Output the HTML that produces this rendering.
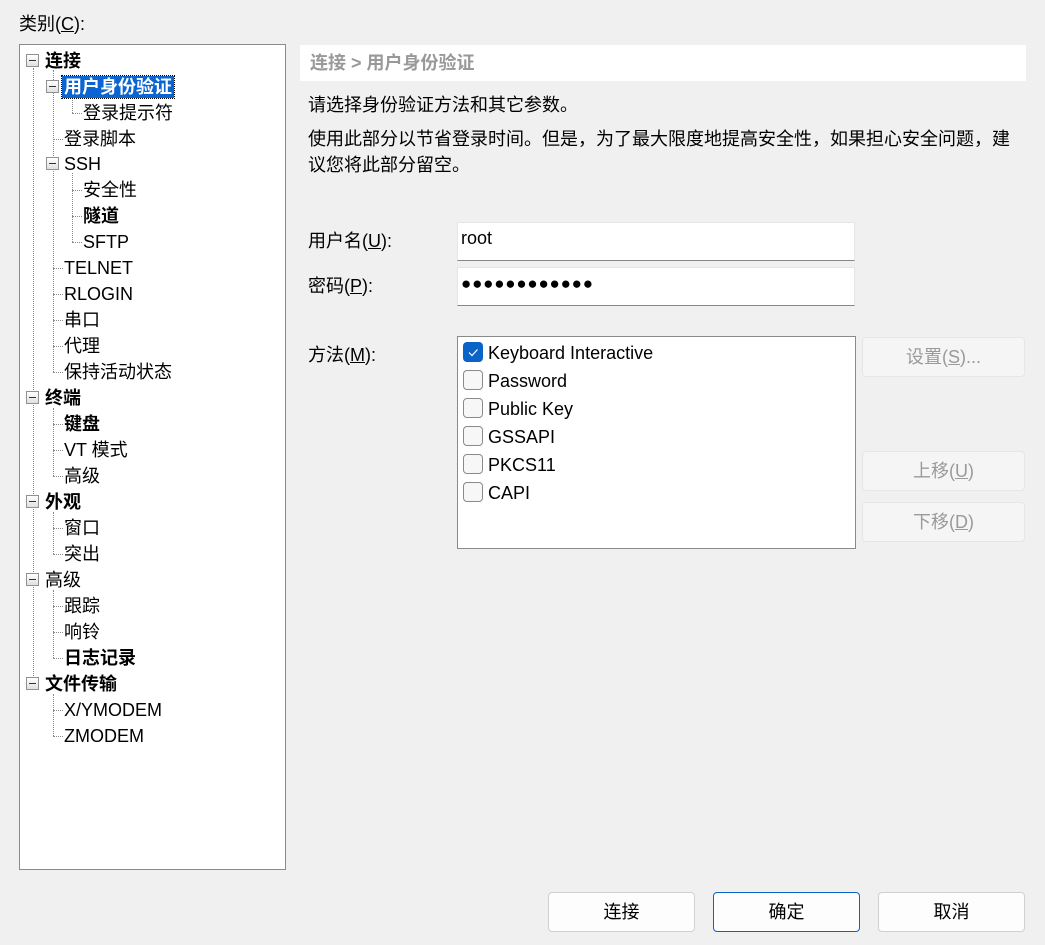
<!DOCTYPE html>
<html><head><meta charset="utf-8"><style>
*{margin:0;padding:0;box-sizing:border-box}
body{width:1045px;height:945px;background:#f0f0f0;font-family:"Liberation Sans","Noto Sans CJK SC",sans-serif;font-size:18px;color:#000;position:relative;overflow:hidden}
.a{position:absolute;white-space:nowrap}
.t{position:absolute;white-space:nowrap;line-height:22px;height:22px}
.b{font-weight:bold}
.box{position:absolute;width:13px;height:13px;border:1px solid #919191;background:linear-gradient(#fff,#e0e0e0)}
.box:after{content:"";position:absolute;left:2px;top:5px;width:7px;height:1px;background:#333}
.v{position:absolute;border-left:1px dotted #8a8a8a;width:0}
.h{position:absolute;border-top:1px dotted #8a8a8a;height:0}
.btn{position:absolute;border:1px solid #d0d0d0;border-radius:4px;background:#fdfdfd;text-align:center;line-height:38px;font-size:18px}
.dis{background:#f5f5f5;border-color:#e6e6e6;color:#9a9a9a}
.cb{position:absolute;left:463px;width:20px;height:20px;border:1px solid #8a8a8a;border-radius:4px;background:#f7f7f7}
.inp{position:absolute;left:457px;width:398px;background:#fff;border-bottom:1px solid #888;border-top:1px solid #e5e5e5;border-left:1px solid #e5e5e5;border-right:1px solid #e5e5e5}
u{text-decoration:underline}
</style></head><body>
<div class="a" style="left:19px;top:12px;line-height:24px">类别(<u>C</u>):</div>
<div class="a" style="left:19px;top:44px;width:267px;height:826px;background:#fff;border:1px solid #8a8a8a"></div>

<div class="v" style="left:33px;top:68px;height:616px"></div>
<div class="v" style="left:53px;top:70px;height:302px"></div>
<div class="v" style="left:53px;top:408px;height:68px"></div>
<div class="v" style="left:53px;top:512px;height:42px"></div>
<div class="v" style="left:53px;top:590px;height:68px"></div>
<div class="v" style="left:53px;top:694px;height:42px"></div>
<div class="v" style="left:72px;top:96px;height:17px"></div>
<div class="v" style="left:72px;top:173px;height:69px"></div>
<div class="h" style="left:72px;top:113px;width:10px"></div>
<div class="h" style="left:72px;top:190px;width:10px"></div>
<div class="h" style="left:72px;top:216px;width:10px"></div>
<div class="h" style="left:72px;top:242px;width:10px"></div>
<div class="h" style="left:53px;top:139px;width:10px"></div>
<div class="h" style="left:53px;top:268px;width:10px"></div>
<div class="h" style="left:53px;top:294px;width:10px"></div>
<div class="h" style="left:53px;top:320px;width:10px"></div>
<div class="h" style="left:53px;top:346px;width:10px"></div>
<div class="h" style="left:53px;top:372px;width:10px"></div>
<div class="h" style="left:53px;top:424px;width:10px"></div>
<div class="h" style="left:53px;top:450px;width:10px"></div>
<div class="h" style="left:53px;top:476px;width:10px"></div>
<div class="h" style="left:53px;top:528px;width:10px"></div>
<div class="h" style="left:53px;top:554px;width:10px"></div>
<div class="h" style="left:53px;top:606px;width:10px"></div>
<div class="h" style="left:53px;top:632px;width:10px"></div>
<div class="h" style="left:53px;top:658px;width:10px"></div>
<div class="h" style="left:53px;top:710px;width:10px"></div>
<div class="h" style="left:53px;top:736px;width:10px"></div>

<div class="box" style="left:26px;top:54px"></div>
<div class="box" style="left:46px;top:80px"></div>
<div class="box" style="left:46px;top:157px"></div>
<div class="box" style="left:26px;top:391px"></div>
<div class="box" style="left:26px;top:495px"></div>
<div class="box" style="left:26px;top:573px"></div>
<div class="box" style="left:26px;top:677px"></div>

<div class="t b" style="left:45px;top:50px">连接</div>
<div class="t b" style="left:62px;top:76px;background:#0a64d2;color:#fff;padding:0 2px;outline:1px dotted #000">用户身份验证</div>
<div class="t" style="left:83px;top:102px">登录提示符</div>
<div class="t" style="left:64px;top:128px">登录脚本</div>
<div class="t" style="left:64px;top:153px">SSH</div>
<div class="t" style="left:83px;top:179px">安全性</div>
<div class="t b" style="left:83px;top:205px">隧道</div>
<div class="t" style="left:83px;top:231px">SFTP</div>
<div class="t" style="left:64px;top:257px">TELNET</div>
<div class="t" style="left:64px;top:283px">RLOGIN</div>
<div class="t" style="left:64px;top:309px">串口</div>
<div class="t" style="left:64px;top:335px">代理</div>
<div class="t" style="left:64px;top:361px">保持活动状态</div>
<div class="t b" style="left:45px;top:387px">终端</div>
<div class="t b" style="left:64px;top:413px">键盘</div>
<div class="t" style="left:64px;top:439px">VT 模式</div>
<div class="t" style="left:64px;top:465px">高级</div>
<div class="t b" style="left:45px;top:491px">外观</div>
<div class="t" style="left:64px;top:517px">窗口</div>
<div class="t" style="left:64px;top:543px">突出</div>
<div class="t" style="left:45px;top:569px">高级</div>
<div class="t" style="left:64px;top:595px">跟踪</div>
<div class="t" style="left:64px;top:621px">响铃</div>
<div class="t b" style="left:64px;top:647px">日志记录</div>
<div class="t b" style="left:45px;top:673px">文件传输</div>
<div class="t" style="left:64px;top:699px">X/YMODEM</div>
<div class="t" style="left:64px;top:725px">ZMODEM</div>

<div class="a" style="left:300px;top:45px;width:726px;height:36px;background:#fff"></div>
<div class="a b" style="left:310px;top:51px;line-height:24px;color:#999">连接 &gt; 用户身份验证</div>
<div class="a" style="left:308px;top:93px;line-height:24px">请选择身份验证方法和其它参数。</div>
<div class="a" style="left:308px;top:126px;line-height:26px;white-space:normal;width:706px">使用此部分以节省登录时间。但是，为了最大限度地提高安全性，如果担心安全问题，建议您将此部分留空。</div>

<div class="a" style="left:308px;top:229px;line-height:24px">用户名(<u>U</u>):</div>
<div class="inp" style="top:222px;height:39px"></div>
<div class="a" style="left:461px;top:226px;line-height:24px">root</div>
<div class="a" style="left:308px;top:274px;line-height:24px">密码(<u>P</u>):</div>
<div class="inp" style="top:267px;height:39px"></div>
<div class="a" style="left:461px;top:272px;line-height:24px;letter-spacing:0.8px;font-size:17px">●●●●●●●●●●●●</div>

<div class="a" style="left:308px;top:343px;line-height:24px">方法(<u>M</u>):</div>
<div class="a" style="left:457px;top:336px;width:399px;height:213px;background:#fff;border:1px solid #8a8a8a"></div>
<div class="cb" style="top:342px;background:#0a64c8;border-color:#0a64c8"><svg width="18" height="18" style="position:absolute;left:0;top:0"><path d="M5 9.5l3 3 5.5-6" stroke="#fff" stroke-width="1.2" fill="none"/></svg></div>
<div class="a" style="left:488px;top:341px;line-height:24px">Keyboard Interactive</div>
<div class="cb" style="top:370px"></div><div class="a" style="left:488px;top:369px;line-height:24px">Password</div>
<div class="cb" style="top:398px"></div><div class="a" style="left:488px;top:397px;line-height:24px">Public Key</div>
<div class="cb" style="top:426px"></div><div class="a" style="left:488px;top:425px;line-height:24px">GSSAPI</div>
<div class="cb" style="top:454px"></div><div class="a" style="left:488px;top:453px;line-height:24px">PKCS11</div>
<div class="cb" style="top:482px"></div><div class="a" style="left:488px;top:481px;line-height:24px">CAPI</div>

<div class="btn dis" style="left:862px;top:337px;width:163px;height:40px">设置(<u>S</u>)...</div>
<div class="btn dis" style="left:862px;top:451px;width:163px;height:40px">上移(<u>U</u>)</div>
<div class="btn dis" style="left:862px;top:502px;width:163px;height:40px">下移(<u>D</u>)</div>

<div class="btn" style="left:548px;top:892px;width:147px;height:40px">连接</div>
<div class="btn" style="left:713px;top:892px;width:147px;height:40px;border-color:#0a64c8">确定</div>
<div class="btn" style="left:878px;top:892px;width:147px;height:40px">取消</div>
</body></html>
